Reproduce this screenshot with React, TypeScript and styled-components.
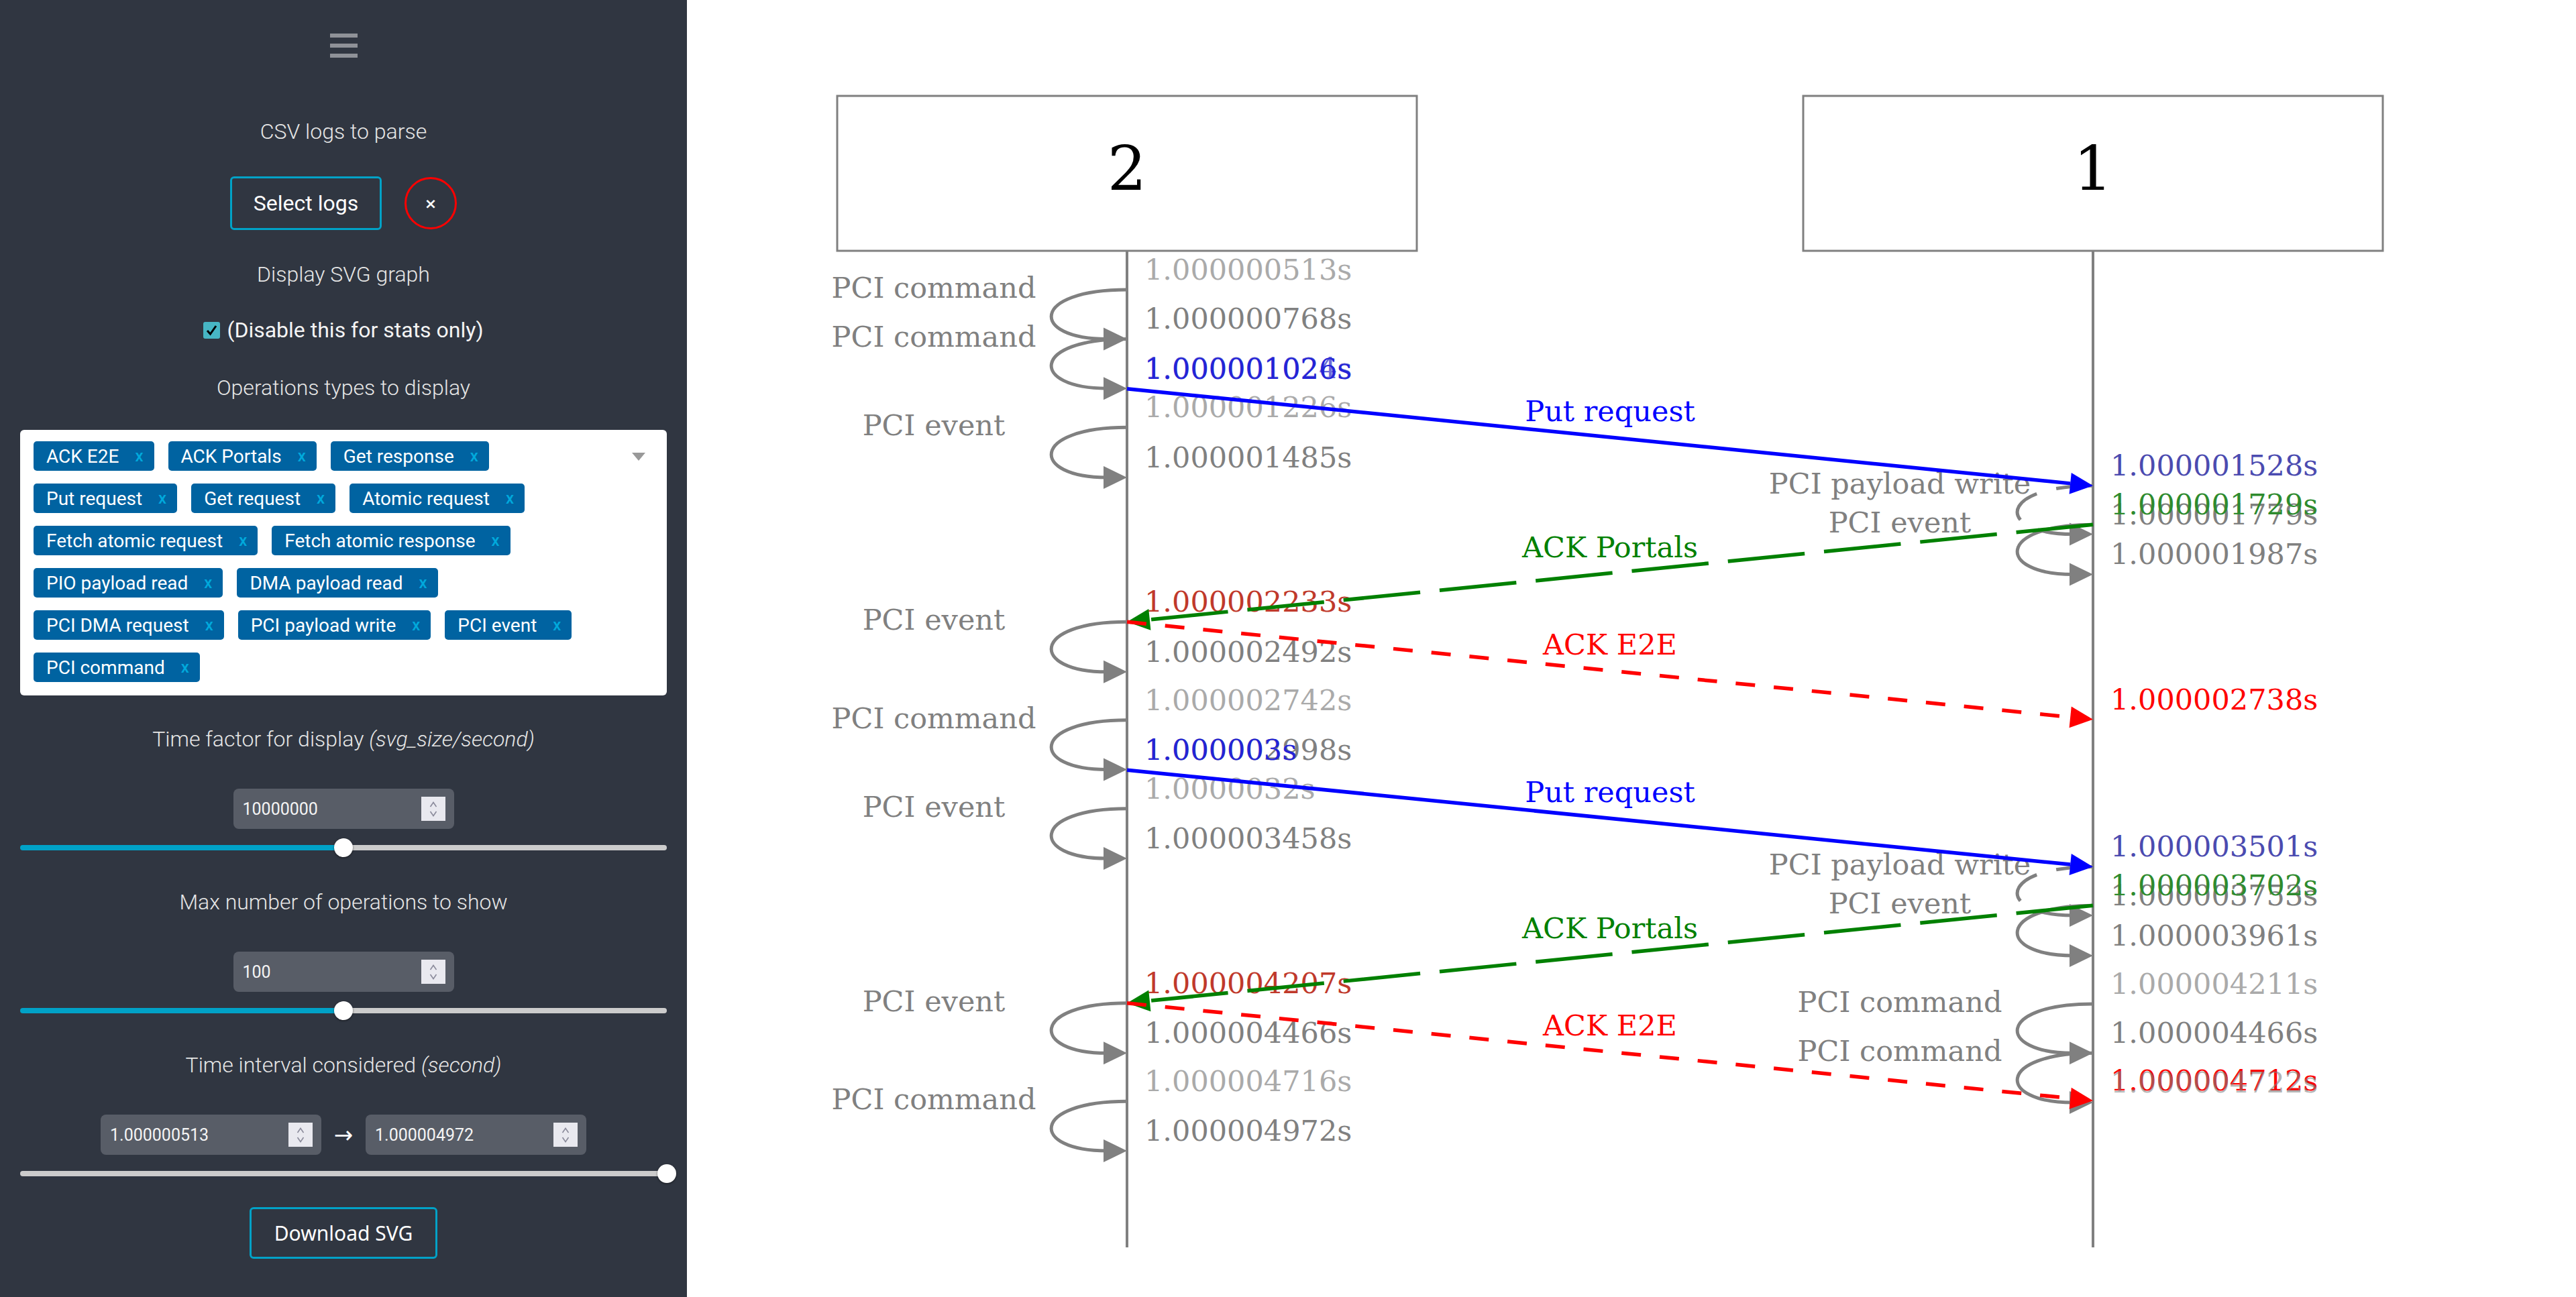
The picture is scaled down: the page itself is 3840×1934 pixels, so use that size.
import React from 'react';
import styled, { createGlobalStyle } from 'styled-components';

const GlobalStyle = createGlobalStyle`
  html, body {
    margin: 0;
    padding: 0;
    background: #ffffff;
  }
  body {
    font-family: Roboto, "Liberation Sans", sans-serif;
  }
  #root {
    height: 1934px;
  }
`;

const Page = styled.div`
  display: flex;
  width: 3840px;
  height: 1934px;
  overflow: hidden;
`;

const Sidebar = styled.aside`
  flex: none;
  width: 1024px;
  box-sizing: border-box;
  padding: 0 30px;
  background: #303641;
  display: flex;
  flex-direction: column;
  align-items: center;
  color: #ffffff;
`;

const Burger = styled.div`
  margin-top: 50px;
  width: 41px;
  height: 36px;
  display: flex;
  flex-direction: column;
  justify-content: space-between;

  span {
    display: block;
    height: 6px;
    background: #8f9298;
  }
`;

const FieldLabel = styled.div<{ $gap: number }>`
  margin-top: ${(p) => p.$gap}px;
  height: 40px;
  line-height: 40px;
  font-size: 32px;
  font-weight: 300;
  color: #e6e6e6;
  white-space: nowrap;

  em {
    font-style: italic;
  }
`;

const FileRow = styled.div`
  margin-top: 47px;
  display: flex;
  align-items: center;
  gap: 34px;
`;

const OutlineButton = styled.button<{ $w: number; $h: number; $font: string; $size: number }>`
  width: ${(p) => p.$w}px;
  height: ${(p) => p.$h}px;
  box-sizing: border-box;
  border: 3px solid #00a2c7;
  border-radius: 6px;
  background: transparent;
  color: #ffffff;
  font-family: ${(p) => p.$font};
  font-size: ${(p) => p.$size}px;
  font-weight: 400;
  padding: 0;
  cursor: pointer;
`;

const ClearButton = styled.button`
  width: 78px;
  height: 78px;
  box-sizing: border-box;
  border: 3px solid #ff0000;
  border-radius: 50%;
  background: transparent;
  color: #ffffff;
  font-family: "DejaVu Sans", sans-serif;
  font-size: 22px;
  font-weight: 700;
  padding: 0;
`;

const CheckRow = styled.label`
  margin-top: 43px;
  height: 40px;
  display: flex;
  align-items: center;
  gap: 10px;
  font-size: 32px;
  color: #f4f4f4;
  white-space: nowrap;
`;

const CheckBox = styled.span`
  width: 25px;
  height: 25px;
  border-radius: 3px;
  background: #47b6c4;
  display: flex;
  align-items: center;
  justify-content: center;
`;

const MultiSelect = styled.div`
  margin-top: 43px;
  align-self: stretch;
  position: relative;
  box-sizing: border-box;
  height: 396px;
  padding: 17px 0 20px 20px;
  background: #ffffff;
  border-radius: 6px;
`;

const TagList = styled.div`
  width: 880px;
  display: flex;
  flex-wrap: wrap;
  gap: 19px 21px;
`;

const Tag = styled.span`
  height: 44px;
  box-sizing: border-box;
  padding: 0 16px 0 19px;
  display: inline-flex;
  align-items: center;
  gap: 24px;
  background: #0063a1;
  border-radius: 5px;
  color: #ffffff;
  font-size: 28px;
  white-space: nowrap;
`;

const TagClose = styled.span`
  color: #00a9dc;
  font-size: 24px;
  font-weight: 500;
`;

const Caret = styled.span`
  position: absolute;
  right: 32px;
  top: 34px;
  width: 0;
  height: 0;
  border-left: 10px solid transparent;
  border-right: 10px solid transparent;
  border-top: 12px solid #999999;
`;

const NumberBox = styled.div`
  width: 329px;
  height: 60px;
  box-sizing: border-box;
  padding: 0 13px 0 14px;
  display: flex;
  align-items: center;
  justify-content: space-between;
  background: #585d67;
  border-radius: 8px;
  font-size: 25px;
  color: #f4f4f4;
`;

const Spinner = styled.span`
  width: 36px;
  height: 36px;
  background: #e9e9ef;
  display: flex;
  flex-direction: column;
  align-items: center;
  justify-content: center;
  gap: 5px;
`;

const SingleInput = styled.div`
  margin-top: 54px;
`;

const RangeRow = styled.div`
  margin-top: 54px;
  display: flex;
  align-items: center;
  gap: 17px;
`;

const RangeArrow = styled.span`
  width: 32px;
  text-align: center;
  font-family: "DejaVu Sans", sans-serif;
  font-size: 34px;
  color: #ffffff;
`;

const Slider = styled.div`
  margin-top: 14px;
  align-self: stretch;
  position: relative;
  height: 28px;
  display: flex;
  align-items: center;
`;

const Track = styled.div<{ $fill: number; $color: string }>`
  width: 100%;
  height: 8px;
  border-radius: 4px;
  background: linear-gradient(
    to right,
    ${(p) => p.$color} ${(p) => p.$fill}%,
    #cccccc ${(p) => p.$fill}%
  );
`;

const Thumb = styled.span`
  position: absolute;
  top: 0;
  width: 28px;
  height: 28px;
  margin-left: -14px;
  border-radius: 50%;
  background: #ffffff;
  box-shadow: 0 1px 3px rgba(0, 0, 0, 0.55);
`;

const DownloadWrap = styled.div`
  margin-top: 36px;
`;

const Main = styled.main`
  flex: 1;
  height: 1934px;
  background: #ffffff;
  overflow: hidden;
`;

const Diagram = styled.svg`
  display: block;
`;

const SerifText = styled.text<{ $tone: string; $size?: number }>`
  font-family: "DejaVu Serif", serif;
  font-size: ${(p) => p.$size ?? 43}px;
  fill: ${(p) => p.$tone};
`;

// ---------- sidebar data ----------

const operationTypes = [
  'ACK E2E',
  'ACK Portals',
  'Get response',
  'Put request',
  'Get request',
  'Atomic request',
  'Fetch atomic request',
  'Fetch atomic response',
  'PIO payload read',
  'DMA payload read',
  'PCI DMA request',
  'PCI payload write',
  'PCI event',
  'PCI command',
];

const Chevrons = () => (
  <>
    <svg width="12" height="9" viewBox="0 0 12 9">
      <path d="M1.5 8 L6 1.5 L10.5 8" fill="none" stroke="#8b8b9b" strokeWidth="1.6" />
    </svg>
    <svg width="12" height="9" viewBox="0 0 12 9">
      <path d="M1.5 1 L6 7.5 L10.5 1" fill="none" stroke="#8b8b9b" strokeWidth="1.6" />
    </svg>
  </>
);

const NumberField = ({ value }: { value: string }) => (
  <NumberBox>
    <span>{value}</span>
    <Spinner>
      <Chevrons />
    </Spinner>
  </NumberBox>
);

const RangeSlider = ({ value, color }: { value: number; color: string }) => (
  <Slider>
    <Track $fill={value} $color={color} />
    <Thumb style={{ left: `${value}%` }} />
  </Slider>
);

// ---------- diagram data ----------

const LEFT = 1680;
const RIGHT = 3120;
const yAt = (t: number) => 432 + (t - 513) * 0.28796;

const GRAY = '#808080';
const LIGHT = '#aaaaaa';

type Loop = { x: number; from: number; to: number; label: string; dashed?: boolean };

const loops: Loop[] = [
  { x: LEFT, from: 513, to: 768, label: 'PCI command' },
  { x: LEFT, from: 768, to: 1024, label: 'PCI command' },
  { x: LEFT, from: 1226, to: 1485, label: 'PCI event' },
  { x: LEFT, from: 2233, to: 2492, label: 'PCI event' },
  { x: LEFT, from: 2742, to: 2998, label: 'PCI command' },
  { x: LEFT, from: 3200, to: 3458, label: 'PCI event' },
  { x: LEFT, from: 4207, to: 4466, label: 'PCI event' },
  { x: LEFT, from: 4716, to: 4972, label: 'PCI command' },
  { x: RIGHT, from: 1528, to: 1779, label: 'PCI payload write', dashed: true },
  { x: RIGHT, from: 1729, to: 1987, label: 'PCI event' },
  { x: RIGHT, from: 3501, to: 3753, label: 'PCI payload write', dashed: true },
  { x: RIGHT, from: 3702, to: 3961, label: 'PCI event' },
  { x: RIGHT, from: 4211, to: 4466, label: 'PCI command' },
  { x: RIGHT, from: 4466, to: 4722, label: 'PCI command' },
];

type Message = {
  x1: number;
  t1: number;
  x2: number;
  t2: number;
  label: string;
  color: string;
  dash?: string;
};

const messages: Message[] = [
  { x1: LEFT, t1: 1026, x2: RIGHT, t2: 1528, label: 'Put request', color: '#0000ff' },
  { x1: RIGHT, t1: 1729, x2: LEFT, t2: 2233, label: 'ACK Portals', color: '#008000', dash: '115 29' },
  { x1: LEFT, t1: 2233, x2: RIGHT, t2: 2738, label: 'ACK E2E', color: '#ff0000', dash: '29 28' },
  { x1: LEFT, t1: 3000, x2: RIGHT, t2: 3501, label: 'Put request', color: '#0000ff' },
  { x1: RIGHT, t1: 3702, x2: LEFT, t2: 4207, label: 'ACK Portals', color: '#008000', dash: '115 29' },
  { x1: LEFT, t1: 4207, x2: RIGHT, t2: 4712, label: 'ACK E2E', color: '#ff0000', dash: '29 28' },
];

type Stamp = { x: number; t: number; text: string; tone: string };

// drawn in order, later ones sit on top of earlier ones
const stamps: Stamp[] = [
  { x: LEFT, t: 513, text: '1.000000513s', tone: LIGHT },
  { x: LEFT, t: 768, text: '1.000000768s', tone: GRAY },
  { x: LEFT, t: 1024, text: '1.000001024s', tone: '#6b6bd8' },
  { x: LEFT, t: 1026, text: '1.000001026s', tone: '#2424d6' },
  { x: LEFT, t: 1226, text: '1.000001226s', tone: LIGHT },
  { x: LEFT, t: 1485, text: '1.000001485s', tone: GRAY },
  { x: LEFT, t: 2233, text: '1.000002233s', tone: '#c0392b' },
  { x: LEFT, t: 2492, text: '1.000002492s', tone: GRAY },
  { x: LEFT, t: 2742, text: '1.000002742s', tone: LIGHT },
  { x: LEFT, t: 2998, text: '1.000002998s', tone: GRAY },
  { x: LEFT, t: 3000, text: '1.000003s', tone: '#2424d6' },
  { x: LEFT, t: 3200, text: '1.0000032s', tone: LIGHT },
  { x: LEFT, t: 3458, text: '1.000003458s', tone: GRAY },
  { x: LEFT, t: 4207, text: '1.000004207s', tone: '#c0392b' },
  { x: LEFT, t: 4466, text: '1.000004466s', tone: GRAY },
  { x: LEFT, t: 4716, text: '1.000004716s', tone: LIGHT },
  { x: LEFT, t: 4972, text: '1.000004972s', tone: GRAY },
  { x: RIGHT, t: 1528, text: '1.000001528s', tone: '#4b4bb0' },
  { x: RIGHT, t: 1779, text: '1.000001779s', tone: GRAY },
  { x: RIGHT, t: 1729, text: '1.000001729s', tone: '#2e8b2e' },
  { x: RIGHT, t: 1987, text: '1.000001987s', tone: GRAY },
  { x: RIGHT, t: 2738, text: '1.000002738s', tone: '#ff0000' },
  { x: RIGHT, t: 3501, text: '1.000003501s', tone: '#4b4bb0' },
  { x: RIGHT, t: 3753, text: '1.000003753s', tone: GRAY },
  { x: RIGHT, t: 3702, text: '1.000003702s', tone: '#2e8b2e' },
  { x: RIGHT, t: 3961, text: '1.000003961s', tone: GRAY },
  { x: RIGHT, t: 4211, text: '1.000004211s', tone: LIGHT },
  { x: RIGHT, t: 4466, text: '1.000004466s', tone: GRAY },
  { x: RIGHT, t: 4712, text: '1.000004712s', tone: '#ff0000' },
  { x: RIGHT, t: 4722, text: '1.000004722s', tone: 'rgba(128, 128, 128, 0.6)' },
];

const arrowHead = (x1: number, y1: number, x2: number, y2: number, len = 34, half = 16) => {
  const dx = x2 - x1;
  const dy = y2 - y1;
  const d = Math.hypot(dx, dy);
  const ux = dx / d;
  const uy = dy / d;
  const bx = x2 - ux * len;
  const by = y2 - uy * len;
  const nx = -uy;
  const ny = ux;
  return {
    bx,
    by,
    points: `${x2},${y2} ${bx + nx * half},${by + ny * half} ${bx - nx * half},${by - ny * half}`,
  };
};

const LoopArrow = ({ loop }: { loop: Loop }) => {
  const y1 = yAt(loop.from);
  const y2 = yAt(loop.to);
  const x = loop.x;
  return (
    <g>
      <path
        d={`M ${x} ${y1} C ${x - 145} ${y1}, ${x - 145} ${y2}, ${x - 30} ${y2}`}
        fill="none"
        stroke={GRAY}
        strokeWidth={5}
        strokeDasharray={loop.dashed ? '55 30' : undefined}
      />
      <polygon points={`${x},${y2} ${x - 35},${y2 - 17} ${x - 35},${y2 + 17}`} fill={GRAY} />
    </g>
  );
};

const MessageArrow = ({ msg }: { msg: Message }) => {
  const y1 = yAt(msg.t1);
  const y2 = yAt(msg.t2);
  const head = arrowHead(msg.x1, y1, msg.x2, y2);
  return (
    <g>
      <line
        x1={msg.x1}
        y1={y1}
        x2={head.bx}
        y2={head.by}
        stroke={msg.color}
        strokeWidth={5.5}
        strokeDasharray={msg.dash}
      />
      <polygon points={head.points} fill={msg.color} />
    </g>
  );
};

const Lifeline = ({ x, name }: { x: number; name: string }) => (
  <g>
    <rect x={x - 432} y={143} width={864} height={231} fill="#ffffff" stroke={GRAY} strokeWidth={3} />
    <SerifText x={x} y={283} textAnchor="middle" $tone="#000000" $size={92}>
      {name}
    </SerifText>
    <line x1={x} y1={374} x2={x} y2={1860} stroke={GRAY} strokeWidth={4} />
  </g>
);

const SequenceDiagram = () => (
  <Diagram width={2816} height={1934} viewBox="1024 0 2816 1934">
    <Lifeline x={LEFT} name="2" />
    <Lifeline x={RIGHT} name="1" />
    {stamps.map((s, i) => (
      <SerifText key={`s${i}`} x={s.x + 26} y={yAt(s.t) - 15} $tone={s.tone}>
        {s.text}
      </SerifText>
    ))}
    {loops.map((l, i) => (
      <SerifText key={`ll${i}`} x={l.x - 288} y={yAt(l.from) + 12} textAnchor="middle" $tone={GRAY}>
        {l.label}
      </SerifText>
    ))}
    {loops.map((l, i) => (
      <LoopArrow key={`l${i}`} loop={l} />
    ))}
    {messages.map((m, i) => (
      <MessageArrow key={`m${i}`} msg={m} />
    ))}
    {messages.map((m, i) => (
      <SerifText
        key={`ml${i}`}
        x={(m.x1 + m.x2) / 2}
        y={(yAt(m.t1) + yAt(m.t2)) / 2 - 24}
        textAnchor="middle"
        $tone={m.color}
      >
        {m.label}
      </SerifText>
    ))}
  </Diagram>
);

const App = () => (
  <>
    <GlobalStyle />
    <Page>
      <Sidebar>
        <Burger>
          <span />
          <span />
          <span />
        </Burger>
        <FieldLabel $gap={90}>CSV logs to parse</FieldLabel>
        <FileRow>
          <OutlineButton $w={226} $h={80} $font='Roboto, sans-serif' $size={32}>
            Select logs
          </OutlineButton>
          <ClearButton>×</ClearButton>
        </FileRow>
        <FieldLabel $gap={46}>Display SVG graph</FieldLabel>
        <CheckRow>
          <CheckBox>
            <svg width="19" height="19" viewBox="0 0 19 19">
              <path d="M3 10 L7.5 15 L16 3" fill="none" stroke="#000000" strokeWidth="3" />
            </svg>
          </CheckBox>
          (Disable this for stats only)
        </CheckRow>
        <FieldLabel $gap={46}>Operations types to display</FieldLabel>
        <MultiSelect>
          <TagList>
            {operationTypes.map((op) => (
              <Tag key={op}>
                {op}
                <TagClose>x</TagClose>
              </Tag>
            ))}
          </TagList>
          <Caret />
        </MultiSelect>
        <FieldLabel $gap={45}>
          Time factor for display <em>(svg_size/second)</em>
        </FieldLabel>
        <SingleInput>
          <NumberField value="10000000" />
        </SingleInput>
        <RangeSlider value={50} color="#00a2c7" />
        <FieldLabel $gap={47}>Max number of operations to show</FieldLabel>
        <SingleInput>
          <NumberField value="100" />
        </SingleInput>
        <RangeSlider value={50} color="#00a2c7" />
        <FieldLabel $gap={47}>
          Time interval considered <em>(second)</em>
        </FieldLabel>
        <RangeRow>
          <NumberField value="1.000000513" />
          <RangeArrow>→</RangeArrow>
          <NumberField value="1.000004972" />
        </RangeRow>
        <RangeSlider value={100} color="#cccccc" />
        <DownloadWrap>
          <OutlineButton $w={280} $h={77} $font='"Noto Sans", "Open Sans", sans-serif' $size={30}>
            Download SVG
          </OutlineButton>
        </DownloadWrap>
      </Sidebar>
      <Main>
        <SequenceDiagram />
      </Main>
    </Page>
  </>
);

export default App;
